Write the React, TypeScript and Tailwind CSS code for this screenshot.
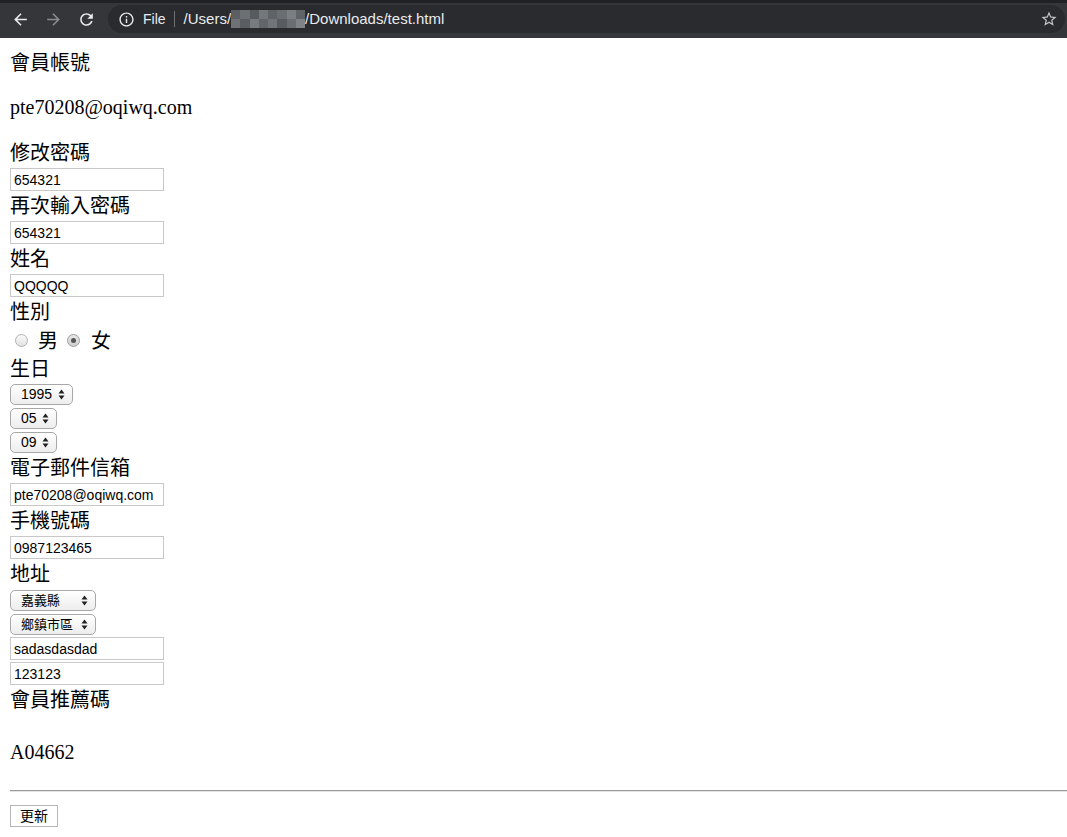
import React from 'react';

const blurCells = [
  'bg-[#5b5e62]', 'bg-[#6c6f73]', 'bg-[#575a5e]', 'bg-[#74777b]', 'bg-[#5f6266]', 'bg-[#6a6d71]', 'bg-[#7b7e82]', 'bg-[#606367]',
  'bg-[#6e7175]', 'bg-[#5a5d61]', 'bg-[#777a7e]', 'bg-[#62656a]', 'bg-[#71747a]', 'bg-[#585b5f]', 'bg-[#6b6e72]', 'bg-[#7f8286]'
];

function Label({ children }: { children: React.ReactNode }) {
  return <div className="h-[30px] text-[20px] leading-[30px] text-black">{children}</div>;
}

function Field({ value, className = '' }: { value: string; className?: string }) {
  return (
    <input
      readOnly
      value={value}
      className={`block h-[23px] w-[154px] border border-[#c8c8c8] bg-white px-[3px] font-['Liberation_Sans',sans-serif] text-[14px] text-black outline-none ${className}`}
    />
  );
}

function Arrows() {
  return (
    <svg width="7" height="11" viewBox="0 0 7 11" className="shrink-0">
      <path d="M0.5 4.5 L3.5 0.5 L6.5 4.5 Z" fill="#222" />
      <path d="M0.5 6.5 L6.5 6.5 L3.5 10.5 Z" fill="#222" />
    </svg>
  );
}

function Select({ label, className }: { label: string; className: string }) {
  return (
    <div
      className={`flex h-[21px] items-center justify-between rounded-[5px] border border-[#a8a8a8] bg-gradient-to-b from-white to-[#ededed] pl-[10px] pr-[7px] font-['Liberation_Sans','Noto_Sans_CJK_TC',sans-serif] text-black ${className}`}
    >
      <span>{label}</span>
      <Arrows />
    </div>
  );
}

function Toolbar() {
  return (
    <div className="flex flex-col">
      <div className="h-[3px] bg-[#202124]" />
      <div className="flex h-[35px] items-start bg-[#35363a] pl-[4px] pt-[2px]">
        <div className="flex h-[28px] w-[33px] items-center justify-center">
          <svg width="19" height="19" viewBox="0 0 24 24">
            <path fill="#e8eaed" d="M20 11H7.83l5.59-5.59L12 4l-8 8 8 8 1.41-1.41L7.83 13H20v-2z" />
          </svg>
        </div>
        <div className="flex h-[28px] w-[33px] items-center justify-center">
          <svg width="19" height="19" viewBox="0 0 24 24">
            <path fill="#8a8b8e" d="M12 4l-1.41 1.41L16.17 11H4v2h12.17l-5.58 5.59L12 20l8-8z" />
          </svg>
        </div>
        <div className="flex h-[28px] w-[33px] items-center justify-center">
          <svg width="19" height="19" viewBox="0 0 24 24">
            <path
              fill="#e8eaed"
              d="M17.65 6.35C16.2 4.9 14.21 4 12 4c-4.42 0-7.99 3.58-7.99 8s3.57 8 7.99 8c3.73 0 6.84-2.55 7.73-6h-2.08c-.82 2.33-3.04 4-5.65 4-3.31 0-6-2.69-6-6s2.69-6 6-6c1.66 0 3.14.69 4.22 1.78L13 11h7V4l-2.35 2.35z"
            />
          </svg>
        </div>
        <div className="ml-[5px] mr-[2px] flex h-[28px] flex-1 items-center rounded-full bg-[#292b2f] pl-[10px] pr-[7px] font-['Liberation_Sans',sans-serif] text-[#e8eaed]">
          <svg width="17" height="17" viewBox="0 0 24 24">
            <path
              fill="#e8eaed"
              d="M11 7h2v2h-2zm0 4h2v6h-2zm1-9C6.48 2 2 6.48 2 12s4.48 10 10 10 10-4.48 10-10S17.52 2 12 2zm0 18c-4.41 0-8-3.59-8-8s3.59-8 8-8 8 3.59 8 8-3.59 8-8 8z"
            />
          </svg>
          <span className="ml-[8px] text-[14px]">File</span>
          <span className="ml-[8px] h-[16px] w-px bg-[#6d6f73]" />
          <span className="ml-[9px] text-[15px]">/Users/</span>
          <div className="grid h-[18px] w-[74px] grid-cols-8 grid-rows-2">
            {blurCells.map((c, i) => (
              <div key={i} className={c} />
            ))}
          </div>
          <span className="text-[15px]">/Downloads/test.html</span>
          <div className="flex-1" />
          <svg width="18" height="18" viewBox="0 0 24 24">
            <path
              fill="#c4c6c9"
              d="M22 9.24l-7.19-.62L12 2 9.19 8.63 2 9.24l5.46 4.73L5.82 21 12 17.27 18.18 21l-1.63-7.03L22 9.24zM12 15.4l-3.76 2.27 1-4.28-3.32-2.88 4.38-.38L12 6.1l1.71 4.04 4.38.38-3.32 2.88 1 4.28L12 15.4z"
            />
          </svg>
        </div>
      </div>
    </div>
  );
}

export default function App() {
  return (
    <div className="min-h-screen bg-white">
      <Toolbar />
      <div className="flex flex-col pl-[10px] font-['Liberation_Serif','Noto_Sans_CJK_TC',serif]">
        <div className="mt-[10px]">
          <Label>會員帳號</Label>
        </div>
        <div className="mt-[14px]">
          <Label>pte70208@oqiwq.com</Label>
        </div>

        <div className="mt-[16px]">
          <Label>修改密碼</Label>
        </div>
        <Field value="654321" />
        <Label>再次輸入密碼</Label>
        <Field value="654321" />
        <Label>姓名</Label>
        <Field value="QQQQQ" />
        <Label>性別</Label>
        <div className="flex h-[27px] items-center text-[20px] text-black">
          <span className="ml-[5px] h-[13px] w-[13px] rounded-full border border-[#b3b3b3] bg-gradient-to-b from-[#fbfbfb] to-[#e1e1e1]" />
          <span className="ml-[10px]">男</span>
          <span className="ml-[9px] flex h-[13px] w-[13px] items-center justify-center rounded-full border border-[#9d9d9d] bg-gradient-to-b from-[#e6e6e6] to-[#cfcfcf]">
            <span className="h-[5px] w-[5px] rounded-full bg-[#555]" />
          </span>
          <span className="ml-[11px]">女</span>
        </div>

        <Label>生日</Label>
        <Select label="1995" className="w-[63px] text-[14px]" />
        <Select label="05" className="mt-[3px] w-[47px] text-[14px]" />
        <Select label="09" className="mt-[3px] w-[47px] text-[14px]" />

        <Label>電子郵件信箱</Label>
        <Field value="pte70208@oqiwq.com" />
        <Label>手機號碼</Label>
        <Field value="0987123465" />
        <Label>地址</Label>
        <Select label="嘉義縣" className="mt-[1px] w-[86px] text-[13px]" />
        <Select label="鄉鎮市區" className="mt-[3px] w-[86px] text-[13px]" />
        <Field value="sadasdasdad" className="mt-[2px]" />
        <Field value="123123" className="mt-[2px]" />
        <Label>會員推薦碼</Label>

        <div className="mt-[22px]">
          <Label>A04662</Label>
        </div>

        <div className="mt-[23px] h-px bg-[#9a9a9a]" />
        <div className="h-px bg-[#e4e4e4]" />

        <button className="mt-[13px] h-[22px] w-[48px] border border-[#b5b5b5] bg-white font-['Liberation_Sans','Noto_Sans_CJK_TC',sans-serif] text-[14px] text-black">
          更新
        </button>
      </div>
    </div>
  );
}
